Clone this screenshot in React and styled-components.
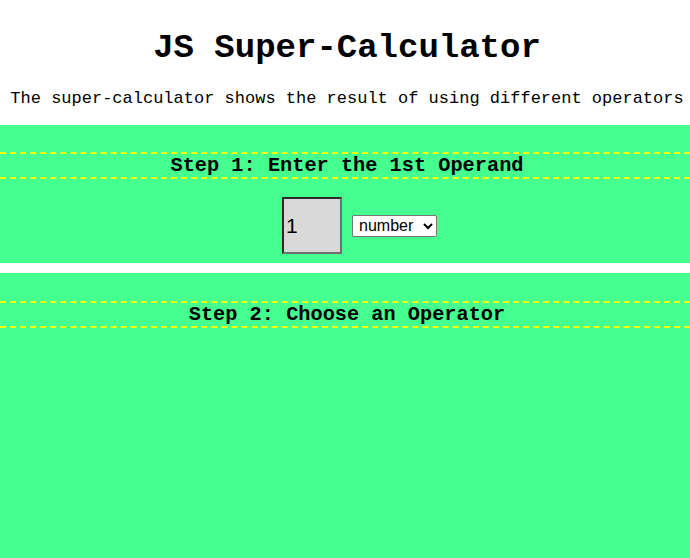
import React from "react";
import styled, { createGlobalStyle } from "styled-components";

const GlobalStyle = createGlobalStyle`
  body {
    margin: 0;
    background: #ffffff;
    font-family: "Liberation Mono", "Courier New", monospace;
    color: #000;
    overflow: hidden;
  }
`;

const Header = styled.header`
  text-align: center;
  padding: 29px 0 17px 4px;
`;

const Title = styled.h1`
  margin: 0 0 22px;
  font-size: 34px;
  font-weight: bold;
`;

const Intro = styled.p`
  margin: 0;
  font-size: 17px;
  white-space: nowrap;
`;

const Step = styled.section`
  box-sizing: border-box;
  background: #45ff8f;
  padding-top: 27px;
  padding-bottom: 9px;
  min-height: ${(p) => (p.$fill ? "285px" : "auto")};
  & + & {
    margin-top: 10px;
    padding-top: 28px;
  }
`;

const StepTitle = styled.h2`
  margin: 0;
  padding-left: 4px;
  font-size: 20.3px;
  font-weight: bold;
  text-align: center;
  border-top: 2px dashed #ffff00;
  border-bottom: 2px dashed #ffff00;
`;

const Row = styled.div`
  display: flex;
  justify-content: center;
  align-items: center;
  gap: 10px;
  margin-top: 18px;
  padding-left: 29px;
`;

const Operand = styled.input`
  box-sizing: border-box;
  width: 60px;
  height: 57px;
  padding: 0 2px;
  background: #d9d9d9;
  border: 2px solid;
  border-color: #2b2b2b #6f6f6f #6f6f6f #2b2b2b;
  font-family: "Liberation Sans", Arial, sans-serif;
  font-size: 21px;
  color: #000;
  outline: none;
`;

const TypeSelect = styled.select`
  box-sizing: border-box;
  width: 85px;
  height: 22px;
  padding: 0 0 0 2px;
  font-family: "Liberation Sans", Arial, sans-serif;
  font-size: 16px;
  background: #fff;
  border: 1px solid #767676;
  border-radius: 2px;
  color: #000;
`;

export default function App() {
  return (
    <>
      <GlobalStyle />
      <Header>
        <Title>JS Super-Calculator</Title>
        <Intro>The super-calculator shows the result of using different operators</Intro>
      </Header>
      <Step>
        <StepTitle>Step 1: Enter the 1st Operand</StepTitle>
        <Row>
          <Operand type="text" defaultValue="1" />
          <TypeSelect defaultValue="number">
            <option value="number">number</option>
            <option value="string">string</option>
          </TypeSelect>
        </Row>
      </Step>
      <Step $fill>
        <StepTitle>Step 2: Choose an Operator</StepTitle>
      </Step>
    </>
  );
}
